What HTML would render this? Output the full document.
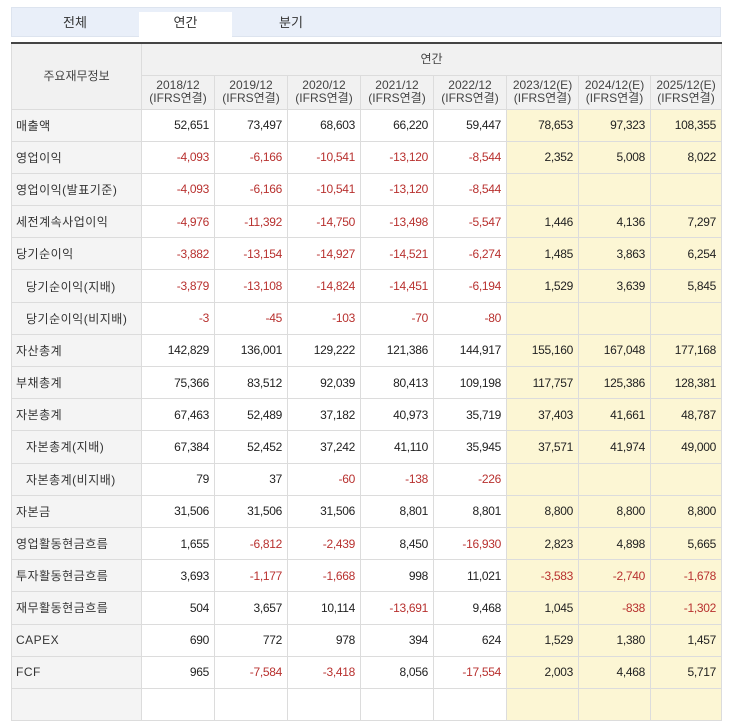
<!DOCTYPE html>
<html><head><meta charset="utf-8"><style>
*{margin:0;padding:0;box-sizing:border-box}
body{width:743px;height:695px;overflow:hidden;background:#fff;font-family:"Liberation Sans","Noto Sans CJK KR",sans-serif;font-size:12px;color:#333;position:relative}
.tabs{position:absolute;left:11px;top:7px;width:710px;height:30px;background:#e9eff9;border:1px solid #dde4ef}
.tab{position:absolute;top:0;height:29px;line-height:30px;text-align:center;font-size:13px;color:#333}
.tab.on{background:#fff;top:4px;height:26px;line-height:22px}
table{position:absolute;left:11px;top:42px;border-collapse:collapse;table-layout:fixed;border-top:2px solid #444}
td,th{border:1px solid #dcdcdc;height:32.2px;font-weight:normal;white-space:nowrap;overflow:hidden}
th{background:#f1f1f1;color:#444;font-size:12px;line-height:13px}
td{text-align:right;padding-right:5px;font-size:12px;letter-spacing:-0.3px;color:#222}
td.l{text-align:left;padding-left:4px;background:#f4f4f4;letter-spacing:0.5px;color:#333}
td.i{padding-left:14px}
.y{background:#fcf6d4}
.r{color:#b8312f}
</style></head><body>
<div class="tabs">
<div class="tab" style="left:0;width:126px">전체</div>
<div class="tab on" style="left:127px;width:93px">연간</div>
<div class="tab" style="left:220px;width:118px">분기</div>
</div>
<table>
<colgroup><col style="width:130px"><col style="width:73px"><col style="width:73px"><col style="width:73px"><col style="width:73px"><col style="width:73px"><col style="width:72px"><col style="width:72px"><col style="width:71px"></colgroup>
<tr><th rowspan="2" style="height:66px">주요재무정보</th><th colspan="8" style="height:32px">연간</th></tr>
<tr><th>2018/12<br>(IFRS연결)</th><th>2019/12<br>(IFRS연결)</th><th>2020/12<br>(IFRS연결)</th><th>2021/12<br>(IFRS연결)</th><th>2022/12<br>(IFRS연결)</th><th>2023/12(E)<br>(IFRS연결)</th><th>2024/12(E)<br>(IFRS연결)</th><th>2025/12(E)<br>(IFRS연결)</th></tr>
<tr><td class="l">매출액</td><td>52,651</td><td>73,497</td><td>68,603</td><td>66,220</td><td>59,447</td><td class="y">78,653</td><td class="y">97,323</td><td class="y">108,355</td></tr>
<tr><td class="l">영업이익</td><td class="r">-4,093</td><td class="r">-6,166</td><td class="r">-10,541</td><td class="r">-13,120</td><td class="r">-8,544</td><td class="y">2,352</td><td class="y">5,008</td><td class="y">8,022</td></tr>
<tr><td class="l">영업이익(발표기준)</td><td class="r">-4,093</td><td class="r">-6,166</td><td class="r">-10,541</td><td class="r">-13,120</td><td class="r">-8,544</td><td class="y"></td><td class="y"></td><td class="y"></td></tr>
<tr><td class="l">세전계속사업이익</td><td class="r">-4,976</td><td class="r">-11,392</td><td class="r">-14,750</td><td class="r">-13,498</td><td class="r">-5,547</td><td class="y">1,446</td><td class="y">4,136</td><td class="y">7,297</td></tr>
<tr><td class="l">당기순이익</td><td class="r">-3,882</td><td class="r">-13,154</td><td class="r">-14,927</td><td class="r">-14,521</td><td class="r">-6,274</td><td class="y">1,485</td><td class="y">3,863</td><td class="y">6,254</td></tr>
<tr><td class="l i">당기순이익(지배)</td><td class="r">-3,879</td><td class="r">-13,108</td><td class="r">-14,824</td><td class="r">-14,451</td><td class="r">-6,194</td><td class="y">1,529</td><td class="y">3,639</td><td class="y">5,845</td></tr>
<tr><td class="l i">당기순이익(비지배)</td><td class="r">-3</td><td class="r">-45</td><td class="r">-103</td><td class="r">-70</td><td class="r">-80</td><td class="y"></td><td class="y"></td><td class="y"></td></tr>
<tr><td class="l">자산총계</td><td>142,829</td><td>136,001</td><td>129,222</td><td>121,386</td><td>144,917</td><td class="y">155,160</td><td class="y">167,048</td><td class="y">177,168</td></tr>
<tr><td class="l">부채총계</td><td>75,366</td><td>83,512</td><td>92,039</td><td>80,413</td><td>109,198</td><td class="y">117,757</td><td class="y">125,386</td><td class="y">128,381</td></tr>
<tr><td class="l">자본총계</td><td>67,463</td><td>52,489</td><td>37,182</td><td>40,973</td><td>35,719</td><td class="y">37,403</td><td class="y">41,661</td><td class="y">48,787</td></tr>
<tr><td class="l i">자본총계(지배)</td><td>67,384</td><td>52,452</td><td>37,242</td><td>41,110</td><td>35,945</td><td class="y">37,571</td><td class="y">41,974</td><td class="y">49,000</td></tr>
<tr><td class="l i">자본총계(비지배)</td><td>79</td><td>37</td><td class="r">-60</td><td class="r">-138</td><td class="r">-226</td><td class="y"></td><td class="y"></td><td class="y"></td></tr>
<tr><td class="l">자본금</td><td>31,506</td><td>31,506</td><td>31,506</td><td>8,801</td><td>8,801</td><td class="y">8,800</td><td class="y">8,800</td><td class="y">8,800</td></tr>
<tr><td class="l">영업활동현금흐름</td><td>1,655</td><td class="r">-6,812</td><td class="r">-2,439</td><td>8,450</td><td class="r">-16,930</td><td class="y">2,823</td><td class="y">4,898</td><td class="y">5,665</td></tr>
<tr><td class="l">투자활동현금흐름</td><td>3,693</td><td class="r">-1,177</td><td class="r">-1,668</td><td>998</td><td>11,021</td><td class="y r">-3,583</td><td class="y r">-2,740</td><td class="y r">-1,678</td></tr>
<tr><td class="l">재무활동현금흐름</td><td>504</td><td>3,657</td><td>10,114</td><td class="r">-13,691</td><td>9,468</td><td class="y">1,045</td><td class="y r">-838</td><td class="y r">-1,302</td></tr>
<tr><td class="l">CAPEX</td><td>690</td><td>772</td><td>978</td><td>394</td><td>624</td><td class="y">1,529</td><td class="y">1,380</td><td class="y">1,457</td></tr>
<tr><td class="l">FCF</td><td>965</td><td class="r">-7,584</td><td class="r">-3,418</td><td>8,056</td><td class="r">-17,554</td><td class="y">2,003</td><td class="y">4,468</td><td class="y">5,717</td></tr>
<tr><td class="l"></td><td></td><td></td><td></td><td></td><td></td><td class="y"></td><td class="y"></td><td class="y"></td></tr>
</table>
</body></html>
